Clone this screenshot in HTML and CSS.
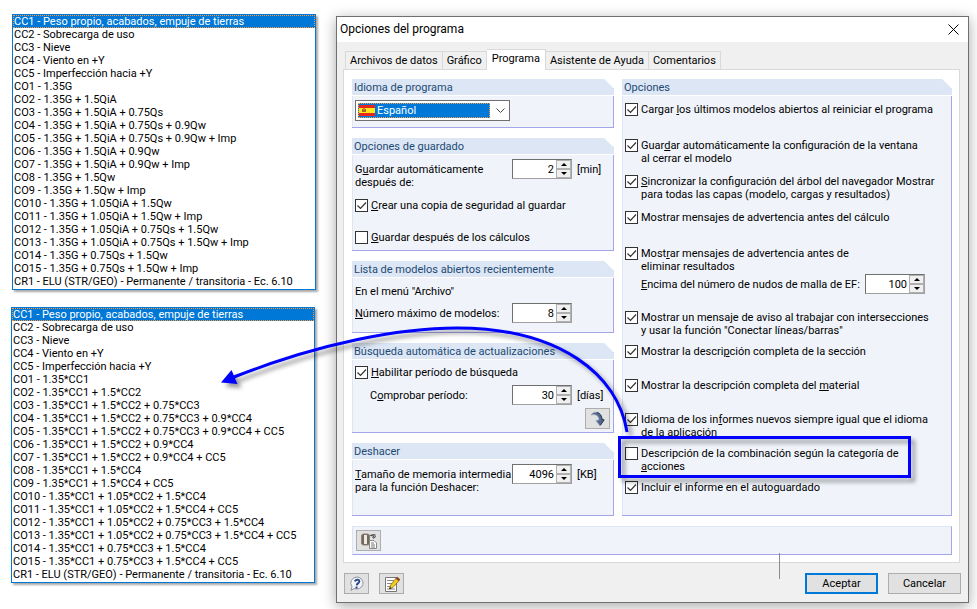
FILE: index.html
```
<!DOCTYPE html>
<html lang="es">
    <head>
        <meta charset="UTF-8" />
        <meta name="viewport" content="width=device-width, initial-scale=1.0" />
        <title>Opciones del programa</title>
        <link rel="stylesheet" href="styles.css">
    </head>
    <body>
        <main class="desktop">
            <div class="lists">
                <select class="listbox listbox-shifted" size="21" aria-label="Combinaciones por acciones">
                    <option selected>CC1 - Peso propio, acabados, empuje de tierras</option>
                    <option>CC2 - Sobrecarga de uso</option>
                    <option>CC3 - Nieve</option>
                    <option>CC4 - Viento en +Y</option>
                    <option>CC5 - Imperfección hacia +Y</option>
                    <option>CO1 - 1.35G</option>
                    <option>CO2 - 1.35G + 1.5QiA</option>
                    <option>CO3 - 1.35G + 1.5QiA + 0.75Qs</option>
                    <option>CO4 - 1.35G + 1.5QiA + 0.75Qs + 0.9Qw</option>
                    <option>CO5 - 1.35G + 1.5QiA + 0.75Qs + 0.9Qw + Imp</option>
                    <option>CO6 - 1.35G + 1.5QiA + 0.9Qw</option>
                    <option>CO7 - 1.35G + 1.5QiA + 0.9Qw + Imp</option>
                    <option>CO8 - 1.35G + 1.5Qw</option>
                    <option>CO9 - 1.35G + 1.5Qw + Imp</option>
                    <option>CO10 - 1.35G + 1.05QiA + 1.5Qw</option>
                    <option>CO11 - 1.35G + 1.05QiA + 1.5Qw + Imp</option>
                    <option>CO12 - 1.35G + 1.05QiA + 0.75Qs + 1.5Qw</option>
                    <option>CO13 - 1.35G + 1.05QiA + 0.75Qs + 1.5Qw + Imp</option>
                    <option>CO14 - 1.35G + 0.75Qs + 1.5Qw</option>
                    <option>CO15 - 1.35G + 0.75Qs + 1.5Qw + Imp</option>
                    <option>CR1 - ELU (STR/GEO) - Permanente / transitoria - Ec. 6.10</option>
                </select>
                <select class="listbox" size="21" aria-label="Combinaciones por casos de carga">
                    <option selected>CC1 - Peso propio, acabados, empuje de tierras</option>
                    <option>CC2 - Sobrecarga de uso</option>
                    <option>CC3 - Nieve</option>
                    <option>CC4 - Viento en +Y</option>
                    <option>CC5 - Imperfección hacia +Y</option>
                    <option>CO1 - 1.35*CC1</option>
                    <option>CO2 - 1.35*CC1 + 1.5*CC2</option>
                    <option>CO3 - 1.35*CC1 + 1.5*CC2 + 0.75*CC3</option>
                    <option>CO4 - 1.35*CC1 + 1.5*CC2 + 0.75*CC3 + 0.9*CC4</option>
                    <option>CO5 - 1.35*CC1 + 1.5*CC2 + 0.75*CC3 + 0.9*CC4 + CC5</option>
                    <option>CO6 - 1.35*CC1 + 1.5*CC2 + 0.9*CC4</option>
                    <option>CO7 - 1.35*CC1 + 1.5*CC2 + 0.9*CC4 + CC5</option>
                    <option>CO8 - 1.35*CC1 + 1.5*CC4</option>
                    <option>CO9 - 1.35*CC1 + 1.5*CC4 + CC5</option>
                    <option>CO10 - 1.35*CC1 + 1.05*CC2 + 1.5*CC4</option>
                    <option>CO11 - 1.35*CC1 + 1.05*CC2 + 1.5*CC4 + CC5</option>
                    <option>CO12 - 1.35*CC1 + 1.05*CC2 + 0.75*CC3 + 1.5*CC4</option>
                    <option>CO13 - 1.35*CC1 + 1.05*CC2 + 0.75*CC3 + 1.5*CC4 + CC5</option>
                    <option>CO14 - 1.35*CC1 + 0.75*CC3 + 1.5*CC4</option>
                    <option>CO15 - 1.35*CC1 + 0.75*CC3 + 1.5*CC4 + CC5</option>
                    <option>CR1 - ELU (STR/GEO) - Permanente / transitoria - Ec. 6.10</option>
                </select>
            </div>

            <form class="dialog">
                <header class="titlebar">
                    <h1>Opciones del programa</h1>
                    <button type="button" class="close" aria-label="Cerrar">
                        <svg width="11" height="11" viewBox="0 0 11 11"><path d="M.5.5l10 10M10.500.5l-10 10" stroke="#000" fill="none" /></svg>
                    </button>
                </header>

                <nav class="tabs">
                    <button type="button">Archivos de datos</button>
                    <button type="button">Gráfico</button>
                    <button type="button" class="active">Programa</button>
                    <button type="button">Asistente de Ayuda</button>
                    <button type="button">Comentarios</button>
                </nav>

                <div class="page">
                    <div class="columns">
                        <div class="column">
                            <section class="group">
                                <h2>Idioma de programa</h2>
                                <div class="combo">
                                    <select aria-label="Idioma de programa">
                                        <option>Español</option>
                                    </select>
                                    <svg class="flag" width="16" height="11" viewBox="0 0 16 11">
                                        <rect width="16" height="11" fill="#e8261c" />
                                        <rect y="3" width="16" height="5" fill="#ffe81a" />
                                        <rect x="3" y="4" width="4" height="3" fill="#a8622a" />
                                        <rect x="4" y="3" width="2" height="2" fill="#c98a2c" />
                                    </svg>
                                    <svg class="chevron" width="9" height="5" viewBox="0 0 9 5"><path d="M.5.5l4 4 4-4" fill="none" stroke="#444" /></svg>
                                </div>
                            </section>

                            <section class="group">
                                <h2>Opciones de guardado</h2>
                                <div class="field">
                                    <label for="autosave">G<u>u</u>ardar automáticamente<br>después de:</label>
                                    <span class="spin">
                                        <input id="autosave" type="text" value="2">
                                        <button type="button" aria-label="Más"></button>
                                        <button type="button" class="down" aria-label="Menos"></button>
                                    </span>
                                    <span class="unit">[min]</span>
                                </div>
                                <div class="checks">
                                    <label class="check"><input type="checkbox" checked><span><u>C</u>rear una copia de seguridad al guardar</span></label>
                                    <label class="check"><input type="checkbox"><span><u>G</u>uardar después de los cálculos</span></label>
                                </div>
                            </section>

                            <section class="group">
                                <h2>Lista de modelos abiertos recientemente</h2>
                                <p class="note">En el menú "Archivo"</p>
                                <div class="field field-last">
                                    <label for="models"><u>N</u>úmero máximo de modelos:</label>
                                    <span class="spin">
                                        <input id="models" type="text" value="8">
                                        <button type="button" aria-label="Más"></button>
                                        <button type="button" class="down" aria-label="Menos"></button>
                                    </span>
                                </div>
                            </section>

                            <section class="group">
                                <h2>Búsqueda automática de actualizaciones</h2>
                                <label class="check check-lead"><input type="checkbox" checked><span><u>H</u>abilitar período de búsqueda</span></label>
                                <div class="field field-indent">
                                    <label for="period">C<u>o</u>mprobar período:</label>
                                    <span class="spin">
                                        <input id="period" type="text" value="30">
                                        <button type="button" aria-label="Más"></button>
                                        <button type="button" class="down" aria-label="Menos"></button>
                                    </span>
                                    <span class="unit">[días]</span>
                                </div>
                                <button type="button" class="icon-button update" aria-label="Buscar ahora">
                                    <svg width="16" height="16" viewBox="0 0 16 16">
                                        <path d="M1 4C4-.5 11 0 12 8l2.500.5-4.500 6.500-4-5.500 3-.5C9 5 6 2.500 1 4z" fill="#54688c" stroke="#8f9fb8" stroke-width=".7" />
                                        <path d="M10.500 14l3.500-5-2-.5C12 5 10 2 7 1.500" fill="none" stroke="#26344e" />
                                    </svg>
                                </button>
                            </section>

                            <section class="group group-grow">
                                <h2>Deshacer</h2>
                                <div class="field">
                                    <label for="memory"><u>T</u>amaño de memoria intermedia<br>para la función Deshacer:</label>
                                    <span class="spin">
                                        <input id="memory" type="text" value="4096">
                                        <button type="button" aria-label="Más"></button>
                                        <button type="button" class="down" aria-label="Menos"></button>
                                    </span>
                                    <span class="unit">[KB]</span>
                                </div>
                            </section>
                        </div>

                        <section class="group group-last">
                            <h2>Opciones</h2>
                            <div class="options options-wide">
                                <label class="check"><input type="checkbox" checked><span>Cargar <u>l</u>os últimos modelos abiertos al reiniciar el programa</span></label>
                                <label class="check"><input type="checkbox" checked><span>Guar<u>d</u>ar automáticamente la configuración de la ventana<br>al cerrar el modelo</span></label>
                                <label class="check"><input type="checkbox" checked><span><u>S</u>incronizar la configuración del árbol del navegador Mostrar<br>para todas las capas (modelo, cargas y resultados)</span></label>
                                <label class="check"><input type="checkbox" checked><span>Mostrar mensa<u>j</u>es de advertencia antes del cálculo</span></label>
                            </div>
                            <label class="check"><input type="checkbox" checked><span>Most<u>r</u>ar mensajes de advertencia antes de<br>eliminar resultados</span></label>
                            <div class="mesh">
                                <label for="mesh"><u>E</u>ncima del número de nudos de malla de EF:</label>
                                <span class="spin">
                                    <input id="mesh" type="text" value="100">
                                    <button type="button" aria-label="Más"></button>
                                    <button type="button" class="down" aria-label="Menos"></button>
                                </span>
                            </div>
                            <div class="options">
                                <label class="check"><input type="checkbox" checked><span>Mostrar un mensaje de aviso al trabajar con intersecciones<br>y usar la función "Conectar líneas/barras"</span></label>
                                <label class="check"><input type="checkbox" checked><span>Mostrar la descri<u>p</u>ción completa de la sección</span></label>
                                <label class="check"><input type="checkbox" checked><span>Mostrar la descripción completa del <u>m</u>aterial</span></label>
                                <label class="check"><input type="checkbox" checked><span>Idioma de los in<u>f</u>ormes nuevos siempre igual que el idioma<br>de la aplicación</span></label>
                                <label class="check"><input type="checkbox"><span>Descripción de la combinación según la categoría de<br><u>a</u>cciones</span></label>
                                <label class="check"><input type="checkbox" checked><span>Incluir el informe en el autoguardado</span></label>
                            </div>
                        </section>
                    </div>

                    <div class="toolbar">
                        <button type="button" class="icon-button" aria-label="Restablecer valores">
                            <svg width="16" height="16" viewBox="0 0 16 16">
                                <rect x=".5" y="1" width="8" height="11" rx="2" fill="#75665a" stroke="#8b8178" />
                                <rect x="3" y="2" width="3" height="9" fill="#eee9e2" />
                                <path d="M9 2.500h3.500v2M11 3.500l1.500 2 2-2M10 2l4-.5v3" fill="none" stroke="#555" />
                                <path d="M8.500 7.500h4.500l2.500 2.500v5.500h-7z" fill="#fff" stroke="#888" />
                                <path d="M10 10h3M10 12h4M10 14h4" stroke="#777" />
                            </svg>
                        </button>
                    </div>
                </div>

                <footer class="actions">
                    <button type="button" class="icon-button" aria-label="Ayuda">
                        <svg width="16" height="16" viewBox="0 0 16 16">
                            <path d="M8 1a6.500 6 0 1 1-3 11.500L2 14.500l1-4A6.500 6 0 0 1 8 1z" fill="#f4f6fa" stroke="#8d929c" />
                            <path d="M6 5.500C6.500 3 10.500 3 10.300 5.500 10.200 7.300 8 7 7.800 9.300M7.500 10.500v2" fill="none" stroke="#2f4a8a" stroke-width="2" />
                        </svg>
                    </button>
                    <button type="button" class="icon-button" aria-label="Editar comentario">
                        <svg width="16" height="16" viewBox="0 0 16 16">
                            <path d="M1.500 1.500h11v14h-11z" fill="#fff" stroke="#777" />
                            <path d="M3 4.500h7M3 7.500h5M3 10.500h3M3 13h8" stroke="#888" />
                            <path d="M13 1l3 2.500-7 8-3.500 1.500 1-4z" fill="#f4cb1c" stroke="#73601c" stroke-width=".7" />
                            <path d="M13 1l3 2.500-1.500 1.600-2.800-2.400z" fill="#8f3b2e" />
                            <path d="M6 11l1.500 1.300-2.300 1z" fill="#111" />
                        </svg>
                    </button>
                    <span class="spacer"></span>
                    <button type="submit" class="push push-default">Aceptar</button>
                    <button type="button" class="push">Cancelar</button>
                </footer>
            </form>

            <!-- Callout: arrow from the highlighted option to the second list -->
            <svg class="callout" width="760" height="600" viewBox="0 0 760 600" aria-hidden="true">
                <g class="callout-mark">
                    <path d="M627 432C618 375 560 328 457 328C400 328 320 343 234 377" fill="none" stroke="#00f" stroke-width="3" />
                    <path d="M221 382.500L231.500 370L237.500 384z" fill="#00f" />
                </g>
            </svg>
            <div class="highlight"></div>
            <div class="tick"></div>
        </main>
    </body>
</html>
```
FILE: styles.css
```
* {
    box-sizing: border-box;
}
body {
    margin: 0;
    background: #fff;
}
body,
button,
input,
select {
    font-family: Roboto, 'Liberation Sans', Arial, sans-serif;
    font-size: 11px;
    line-height: 13px;
    color: #000;
}
h1,
h2,
p {
    margin: 0;
    font-weight: normal;
}
button {
    padding: 0;
}
svg {
    display: block;
}
u {
    text-underline-offset: 1px;
}

.desktop {
    position: relative;
    display: grid;
    grid-template-columns: 305px minmax(0, 1fr);
    gap: 20px;
    align-items: start;
    padding: 14px 8px 7px 11px;
}

/* List boxes */
.lists {
    display: flex;
    flex-direction: column;
    gap: 17px;
}
.listbox {
    width: 304px;
    height: 276px;
    padding: 0;
    overflow: hidden;
    border: 1px solid #0078d7;
    border-radius: 0;
    outline: none;
    background: #fff;
    box-shadow: 2px 2px 2px rgba(0, 0, 0, 0.35);
}
.listbox-shifted {
    align-self: flex-end;
}
.listbox option {
    height: 13px;
    min-height: 13px;
    padding: 0 1px;
    line-height: 13px;
    color: #000;
}
.listbox option:checked {
    background: linear-gradient(#0078d7, #0078d7);
    outline: 1px dotted #ff9a3c;
    outline-offset: -1px;
    -webkit-text-fill-color: #fff;
}

/* Dialog window */
.dialog {
    margin-top: 2px;
    border: 1px solid #707070;
    background: #f0f0f0;
    box-shadow: 0 3px 13px rgba(0, 0, 0, 0.35);
}
.titlebar {
    display: flex;
    align-items: center;
    justify-content: space-between;
    height: 25px;
    padding: 0 9px 0 3px;
    background: #fff;
}
.titlebar h1 {
    font-size: 12px;
}
.close {
    border: 0;
    background: none;
}

.tabs {
    display: flex;
    align-items: flex-end;
    padding: 7px 8px 0;
}
.tabs button {
    height: 18px;
    padding: 0 4px;
    border: 1px solid #d9d9d9;
    border-width: 1px 1px 0 0;
    background: #f0f0f0;
}
.tabs button:first-child {
    border-left-width: 1px;
}
.tabs .active {
    height: 21px;
    margin-bottom: -1px;
    padding: 0 5px 3px;
    background: #fff;
}
.page {
    margin: 0 8px 0 6px;
    padding: 9px 7px 7px 8px;
    border: 1px solid #d9d9d9;
    background: #fff;
}
.columns {
    display: grid;
    grid-template-columns: 262px minmax(0, 1fr);
    gap: 8px;
}
.column {
    display: flex;
    flex-direction: column;
    gap: 10px;
}

/* Group boxes with a cut top right corner */
.group {
    padding-bottom: 6px;
    border: 1px solid #a5a5ea;
    border-width: 0 1px 1px 0;
    background: #f0f4fa;
    box-shadow: inset 1px 0 #dce6f5;
    clip-path: polygon(0 0, calc(100% - 10px) 0, 100% 10px, 100% 100%, 0 100%);
}
.group-grow {
    flex: 1;
}
.group-last {
    padding-bottom: 0;
}
.group h2 {
    height: 17px;
    margin-right: -1px;
    padding: 2px 2px 0;
    border-bottom: 1px solid #fff;
    background: #dce6f5;
    font-size: 11px;
    color: #1c4a73;
}

.combo {
    position: relative;
    width: 155px;
    margin: 4px 3px 0;
    padding: 2px;
    border: 1px solid #707070;
    background: #fff;
}
.combo select {
    display: block;
    appearance: none;
    width: 132px;
    height: 15px;
    padding: 0 0 0 18px;
    border: 1px dotted #f5a04a;
    border-radius: 0;
    background: #0078d7;
    color: #fff;
}
.flag {
    position: absolute;
    left: 3px;
    top: 4px;
}
.chevron {
    position: absolute;
    right: 4px;
    top: 7px;
}

.field {
    display: grid;
    grid-template-columns: minmax(0, 1fr) 60px 33px;
    gap: 5px;
    padding: 4px 3px 0;
    white-space: nowrap;
}
.field label,
.unit {
    padding-top: 4px;
}
.field-last {
    padding-bottom: 3px;
}
.field-indent {
    padding: 6px 3px 0 18px;
}
.note {
    padding: 7px 3px 1px;
}
.spin {
    display: grid;
    grid-template-columns: 1fr 15px;
    grid-template-rows: 9px 9px;
    width: 60px;
    height: 20px;
    border: 1px solid;
    border-color: #707070 #a0a0a0 #a0a0a0 #707070;
    background: #fff;
}
.spin input {
    grid-row: span 2;
    width: 100%;
    min-width: 0;
    padding: 0 2px 0 0;
    border: 0;
    background: none;
    text-align: right;
}
.spin button {
    display: grid;
    place-items: center;
    border: 1px solid #b0b0b0;
    background: #f0f0f0;
}
.spin button::before {
    content: '';
    border: 3px solid transparent;
    border-top-width: 0;
    border-bottom-color: #000;
}
.spin .down::before {
    border-width: 3px 3px 0;
    border-color: #000 transparent transparent;
}

.check {
    display: flex;
    align-items: flex-start;
    gap: 3px;
    padding: 0 3px;
    white-space: nowrap;
}
.check input {
    appearance: none;
    flex: none;
    width: 13px;
    height: 13px;
    margin: 0;
    border: 1px solid #333;
    background: #fff;
}
.check input:checked {
    background: #fff url("data:image/svg+xml,%3Csvg xmlns='http://www.w3.org/2000/svg' viewBox='0 0 11 11'%3E%3Cpath d='M1.500 5.500l3 3 5.500-6' fill='none' stroke='%23333' stroke-width='1.200'/%3E%3C/svg%3E");
}
.check-lead {
    padding-top: 6px;
}
.checks {
    display: grid;
    gap: 19px;
    padding-top: 10px;
}
.options {
    display: grid;
    grid-auto-rows: 34px;
}
.options-wide {
    grid-auto-rows: 36px;
    padding-top: 7px;
}
.mesh {
    display: flex;
    align-items: center;
    justify-content: space-between;
    padding: 1px 26px 17px 19px;
}

.icon-button {
    display: grid;
    place-items: center;
    width: 25px;
    height: 21px;
    border: 1px solid #adadad;
    background: #e1e1e1;
}
.update {
    margin: 3px 3px -3px auto;
}
.toolbar {
    margin-top: 10px;
    padding: 3px;
    border: 1px solid #a5a5ea;
    border-top-color: #dce6f5;
    border-left-color: #dce6f5;
    background: #f0f4fa;
}

.actions {
    display: flex;
    gap: 10px;
    padding: 10px 7px 8px;
}
.spacer {
    flex: 1;
}
.push {
    width: 73px;
    height: 21px;
    border: 1px solid #adadad;
    background: #e1e1e1;
}
.push-default {
    border: 2px solid #0078d7;
}

/* Annotations drawn over the windows */
.callout,
.highlight,
.tick {
    position: absolute;
    pointer-events: none;
}
.callout {
    left: 0;
    top: 0;
}
.callout-mark,
.highlight {
    filter: drop-shadow(4px 4px 2px rgba(0, 0, 0, 0.4));
}
.highlight {
    left: 618px;
    top: 436px;
    width: 293px;
    height: 42px;
    border: 3px solid #00f;
}
.tick {
    left: 779px;
    top: 553px;
    width: 1px;
    height: 26px;
    background: #8c8c8c;
}
```
